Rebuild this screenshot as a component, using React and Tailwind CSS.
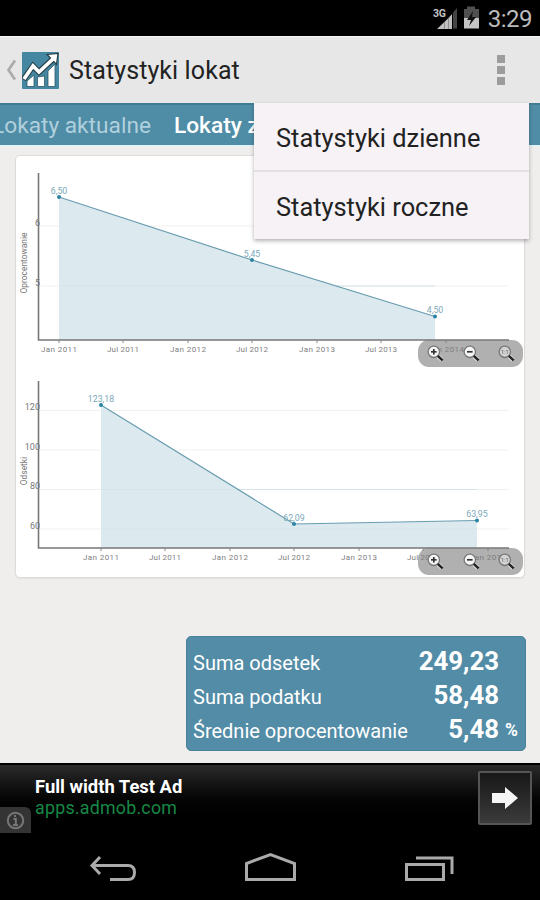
import React from 'react';

const charts = [
  {
    name: 'Oprocentowanie',
    height: 208,
    bottom: 184,
    titleY: 107,
    yTicks: [
      { label: '6', y: 70 },
      { label: '5', y: 130 }
    ],
    xTicks: [
      { label: 'Jan 2011', x: 43 },
      { label: 'Jul 2011', x: 107 },
      { label: 'Jan 2012', x: 172 },
      { label: 'Jul 2012', x: 236 },
      { label: 'Jan 2013', x: 301 },
      { label: 'Jul 2013', x: 365 },
      { label: 'Jan 2014', x: 430 }
    ],
    points: [
      { label: '6,50', x: 43, y: 41 },
      { label: '5,45', x: 236, y: 104 },
      { label: '4,50', x: 419, y: 160.5 }
    ]
  },
  {
    name: 'Odsetki',
    height: 212,
    bottom: 184,
    titleY: 107,
    yTicks: [
      { label: '120', y: 46.5 },
      { label: '100', y: 86 },
      { label: '80', y: 125.5 },
      { label: '60', y: 165 }
    ],
    xTicks: [
      { label: 'Jan 2011', x: 85 },
      { label: 'Jul 2011', x: 149 },
      { label: 'Jan 2012', x: 214 },
      { label: 'Jul 2012', x: 278 },
      { label: 'Jan 2013', x: 343 },
      { label: 'Jul 2013', x: 407 },
      { label: 'Jan 2014', x: 472 }
    ],
    points: [
      { label: '123,18', x: 85, y: 41 },
      { label: '62,09', x: 278, y: 160 },
      { label: '63,95', x: 461, y: 156.5 }
    ]
  }
];

const summary = [
  { label: 'Suma odsetek', value: '249,23', unit: '' },
  { label: 'Suma podatku', value: '58,48', unit: '' },
  { label: 'Średnie oprocentowanie', value: '5,48', unit: '%' }
];

const Magnifier = ({ type }) => (
  <svg width="17" height="17" viewBox="0 0 17 17" fill="none">
    <path d="M10 10.2 L15 15" stroke="#e4e4e4" strokeWidth="4.2" />
    <circle cx="6.8" cy="6.8" r="5.7" fill={type === 'reset' ? '#d2d2d2' : '#f5f5f5'} stroke="#777" strokeWidth="1.3" />
    <path d="M10.8 10.8 L15.6 15.4" stroke="#222" strokeWidth="2.5" />
    {type !== 'reset' && <path d="M4 6.8 H9.6" stroke="#333" strokeWidth="1.7" />}
    {type === 'in' && <path d="M6.8 4 V9.600" stroke="#333" strokeWidth="1.7" />}
    {type === 'reset' && (
      <text x="6.8" y="9" textAnchor="middle" fontSize="6" fill="#666">1:1</text>
    )}
  </svg>
);

const Chart = ({ chart }) => {
  const { name, height, bottom, titleY, yTicks, xTicks, points } = chart;
  const line = points.map((p) => `${p.x},${p.y}`).join(' ');
  const first = points[0];
  const last = points[points.length - 1];

  return (
    <div className="relative">
      <svg className="block w-full" viewBox={`0 0 508 ${height}`} height={height}>
        {yTicks.map((t) => (
          <line key={t.label} x1="22" x2="493" y1={t.y} y2={t.y} stroke="#f1f1ef" strokeWidth="1.2" />
        ))}
        <polygon points={`${first.x},${bottom} ${line} ${last.x},${bottom}`} fill="#dceaf0" />
        {/* grid lines stay faintly visible through the filled area */}
        {yTicks.filter((t) => t.y > 125).map((t) => (
          <line key={t.label} x1={first.x} x2={last.x} y1={t.y} y2={t.y} stroke="#d6e4e7" />
        ))}
        <polyline points={line} fill="none" stroke="#6a9cb0" strokeWidth="1.2" />
        <path d={`M22.5 17 V${bottom} H493`} fill="none" stroke="#777" strokeWidth="1.6" />
        {xTicks.map((t) => (
          <g key={t.label}>
            <line x1={t.x} x2={t.x} y1={bottom} y2={bottom + 3} stroke="#888" />
            <text x={t.x} y={bottom + 11.5} textAnchor="middle" fontSize="8" fill="#808080" textLength={t.label.startsWith('Jan') ? 36 : 32}>
              {t.label}
            </text>
          </g>
        ))}
        {yTicks.map((t) => (
          <text key={t.label} x="24" y={t.y - 0.5} textAnchor="end" fontSize="9" fill="#777">
            {t.label}
          </text>
        ))}
        <text transform={`translate(10.500 ${titleY}) rotate(-90)`} textAnchor="middle" fontSize="8.4" fill="#777">
          {name}
        </text>
        {points.map((p) => (
          <g key={p.label}>
            <circle cx={p.x} cy={p.y} r="2" fill="#2b83a3" />
            <text x={p.x} y={p.y - 3.5} textAnchor="middle" fontSize="8.8" fill="#7ba8b9">
              {p.label}
            </text>
          </g>
        ))}
      </svg>
      <div className="absolute right-px top-[184px] flex h-[27px] w-[105px] items-center justify-between rounded-[11px] bg-[#7c7c7c]/60 pl-[9px] pr-[8px]">
        <Magnifier type="in" />
        <Magnifier type="out" />
        <Magnifier type="reset" />
      </div>
    </div>
  );
};

const StatusBar = () => (
  <div className="flex h-[36px] items-center justify-end bg-black pr-[8px]">
    <svg width="58" height="36" viewBox="0 0 58 36">
      <path d="M7 29 L19 17.500 V29 Z M19 29 V17.5 L22 14 V29 Z" fill="#c0c0c0" />
      <path d="M23 28.500 V12.500 L27 8 V28.500 Z" fill="#444" />
      <path d="M14.500 22 V29 M18.500 18 V29" stroke="#777" strokeWidth=".7" />
      <text x="3" y="16.500" fontSize="10.5" fontWeight="700" fill="#c4c4c4" textLength="13">3G</text>
      <path d="M34 9 H37 V6.500 H45 V9 H49 V18 H34 Z" fill="#505050" />
      <path d="M34 18 H49 V28.500 H34 Z" fill="#c4c4c4" />
      <path d="M43 11 L37 20 H41 L39 26 L46 17 H42 Z" fill="#111" />
    </svg>
    <span className="pt-[2px] text-[24px] leading-[34px] tracking-[-0.5px] text-[#bcbcbc]">3:29</span>
  </div>
);

const Header = () => (
  <header className="flex h-[67px] items-center border-t border-[#f8f8f8] bg-[#e7e7e7] pl-[6px] pr-[35px]">
    <svg width="11" height="22" viewBox="0 0 11 22" fill="none">
      <path d="M9 1.5 L2.5 11 L9 20.5" stroke="#aaa" strokeWidth="2.7" />
    </svg>
    <svg className="ml-[5px]" width="37" height="37" viewBox="0 0 37 37">
      <rect width="37" height="37" rx="1" fill="#4587a0" />
      <g fill="#fff" stroke="#2f5869" strokeWidth=".8">
        <path d="M5 29 L12 23 V34.500 H5 Z" />
        <path d="M15.500 25 L22.500 24 V34.500 H15.500 Z" />
        <path d="M26 19 L33 12 V34.500 H26 Z" />
      </g>
      <path d="M1.500 27.500 L11 14 L17 20 L31 7" fill="none" stroke="#263d46" strokeWidth="5.800" />
      <path d="M25 2.500 L36 1.500 L34.500 12.500 Z" fill="#fff" stroke="#263d46" strokeWidth="1.200" />
      <path d="M2 27 L11 14 L17 20 L32 6" fill="none" stroke="#fff" strokeWidth="3.700" />
    </svg>
    <h1 className="ml-[10px] pt-[2px] text-[25px] tracking-[0.1px] whitespace-nowrap text-[#222]">Statystyki lokat</h1>
    <div className="ml-auto flex flex-col gap-[3px]">
      <i className="size-[8px] bg-[#9c9c9c]" />
      <i className="size-[8px] bg-[#9c9c9c]" />
      <i className="size-[8px] bg-[#9c9c9c]" />
    </div>
  </header>
);

const Menu = () => (
  <div className="absolute left-[254px] top-[103px] w-[275px] bg-[#f6f2f6] text-[25.4px] text-[#222] shadow-[0_2px_4px_rgba(0,0,0,0.3)]">
    <div className="flex h-[69px] items-center border-b-2 border-[#e2e0e3] pt-[3px] pl-[22px]">Statystyki dzienne</div>
    <div className="flex h-[67px] items-center pt-[3px] pl-[22px]">Statystyki roczne</div>
  </div>
);

const AdBanner = () => (
  <div className="relative flex h-[70px] items-start border-t-2 border-black bg-linear-to-b from-[#2b2b2b] to-black to-85% pl-[35px] pr-[8px]">
    <div className="pt-[10px]">
      <p className="text-[18.4px] leading-[23px] font-bold text-white">Full width Test Ad</p>
      <p className="text-[17.8px] leading-[20px] tracking-[0.25px] text-[#168846]">apps.admob.com</p>
    </div>
    <div className="ml-auto mt-[6px] flex size-[54px] items-center justify-center rounded-xs border-2 border-[#555] bg-linear-to-b from-[#181818] to-[#3b3b3b]">
      <svg width="28" height="26" viewBox="0 0 28 26">
        <path d="M1 8 H14 V2 L27 13 L14 24 V18 H1 Z" fill="#f5f5f5" />
      </svg>
    </div>
    <div className="absolute left-0 bottom-0 flex h-[26px] w-[31px] items-center justify-center rounded-tr-[6px] bg-[#343434]">
      <svg width="19" height="19" viewBox="0 0 19 19" fill="none" stroke="#777" strokeWidth="2">
        <circle cx="9.5" cy="9.5" r="7.7" />
        <path d="M7.5 8 H9.8 V14 M7 14 H12 M9 4 V6" />
      </svg>
    </div>
  </div>
);

const NavBar = () => (
  <nav className="flex h-[67px] bg-black">
    <svg width="540" height="67" viewBox="0 0 540 67" fill="none" stroke="#aaa" strokeWidth="3">
      <path d="M100 24 L92 32.5 L100 41 M92 32.5 H128 Q134.500 32.500 134.500 39.500 Q134.500 46.500 128 46.500 H110" />
      <path d="M246.5 46.5 V30.5 L270.5 21.5 L294.5 30.5 V46.5 Z" />
      <path d="M406.5 31.5 H443.5 V46.5 H406.5 Z M416 25 H452 V41" />
    </svg>
  </nav>
);

const App = () => {
  return (
    <div className="relative flex h-[900px] w-[540px] flex-col overflow-hidden bg-[#f0eeed] font-['Roboto',sans-serif]">
      <StatusBar />
      <Header />
      <div className="flex h-[42px] items-center gap-[23px] overflow-hidden border-t-2 border-[#407d93] bg-[#4f8ca5] pt-[2px] text-[22.7px] whitespace-nowrap">
        <span className="ml-[-8px] text-[#b0d0de]">Lokaty aktualne</span>
        <span className="font-medium text-white">Lokaty zakończone</span>
      </div>
      <main className="flex flex-1 flex-col border-t-2 border-[#e3f2f7] px-[15px] pt-[8px]">
        <section className="h-[423px] rounded-[5px] border border-[#dedcdb] bg-white shadow-xs">
          {charts.map((chart) => (
            <Chart key={chart.name} chart={chart} />
          ))}
        </section>
        <section className="mt-[58px] mr-[-1px] flex h-[115px] w-[340px] flex-col self-end rounded-[5px] border border-[#478299] bg-[#538ca6] pt-[7px] pr-[6px] pl-[6px] text-white">
          {summary.map((row) => (
            <div key={row.label} className="flex h-[34px] items-center">
              <span className="pt-[3px] text-[20px]">{row.label}</span>
              <span className="ml-auto text-[25.8px] font-bold">{row.value}</span>
              <span className="w-[20px] pt-[3px] pl-[6px] text-[17.5px] font-bold">{row.unit}</span>
            </div>
          ))}
        </section>
      </main>
      <AdBanner />
      <NavBar />
      <Menu />
    </div>
  );
};

export default App;
